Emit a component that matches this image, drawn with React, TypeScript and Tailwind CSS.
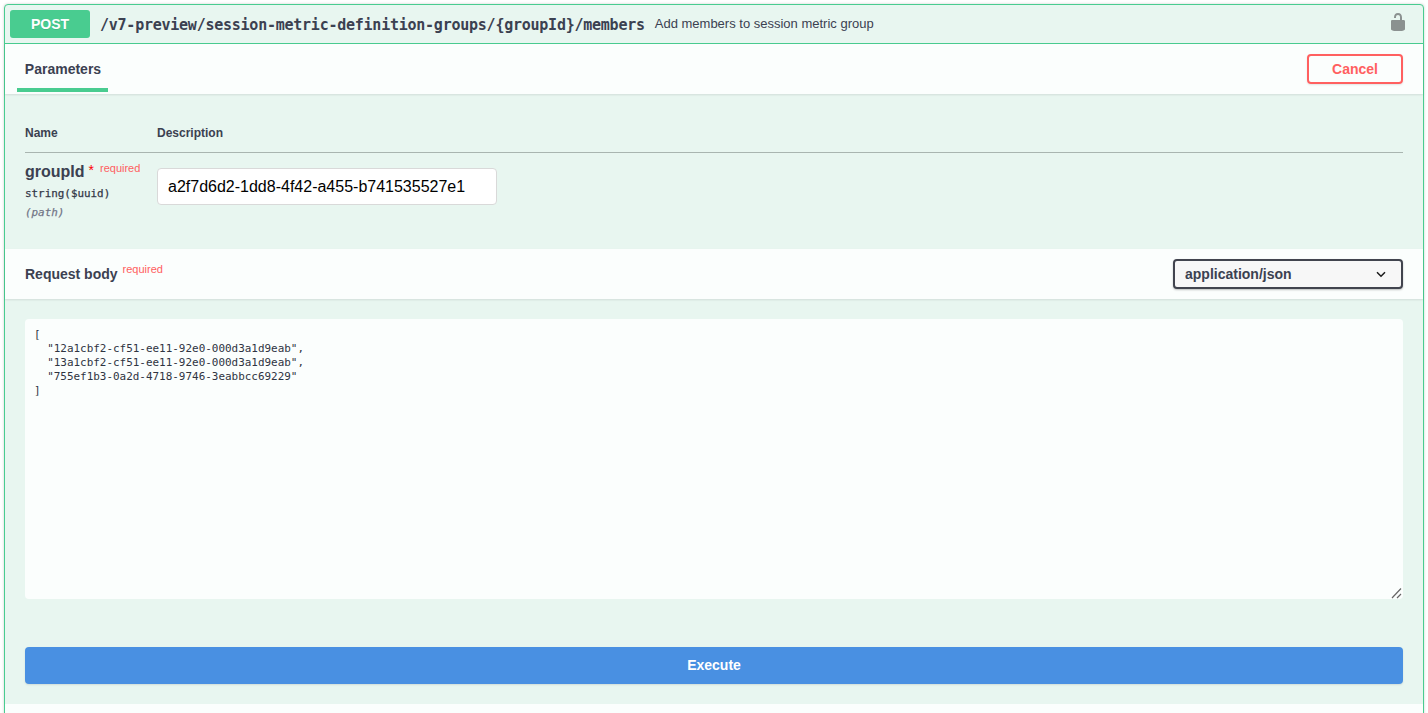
const sans = "font-['Liberation_Sans',Arial,sans-serif]";

const body = `[
  "12a1cbf2-cf51-ee11-92e0-000d3a1d9eab",
  "13a1cbf2-cf51-ee11-92e0-000d3a1d9eab",
  "755ef1b3-0a2d-4718-9746-3eabbcc69229"
]`;

export default function App() {
  return (
    <div className={`h-[713px] overflow-hidden bg-white px-1 pt-1 text-[#3b4151] ${sans}`}>
      <div className="h-[800px] rounded-[4px] border border-[#49cc90] bg-[#e8f6f0] shadow-[0_0_3px_rgba(0,0,0,0.19)]">
        {/* Summary */}
        <div className="flex h-[39px] items-center border-b border-[#49cc90] pl-[5px] pr-[15px]">
          <span className="flex h-[28px] w-[80px] shrink-0 items-center justify-center rounded-[3px] bg-[#49cc90] text-[14px] font-bold text-white [text-shadow:0_1px_0_rgba(0,0,0,0.1)]">
            POST
          </span>
          <span className="ml-[10px] pt-[2px] font-['DejaVu_Sans_Mono',monospace] text-[15px] font-bold tracking-[-0.245px] whitespace-nowrap">
            /v7-preview/session-metric-definition-groups/{"{groupId}"}/members
          </span>
          <span className="ml-[10px] text-[13px] whitespace-nowrap">Add members to session metric group</span>
          <svg className="mb-[4px] ml-auto" width="20" height="20" viewBox="0 0 20 20" fill="#8b9190">
            <path d="M15.8 8H14V5.6C14 2.703 12.665 1 10 1 7.334 1 6 2.703 6 5.6V6h2v-.801C8 3.754 8.797 3 10 3c1.203 0 2 .754 2 2.199V8H4c-.553 0-1 .646-1 1.199V17c0 .549.428 1.139.951 1.307l1.197.387C5.672 18.861 6.55 19 7.1 19h5.8c.549 0 1.428-.139 1.951-.307l1.196-.387c.524-.167.953-.757.953-1.306V9.199C17 8.646 16.352 8 15.8 8z" />
          </svg>
        </div>

        {/* Parameters header */}
        <div className="flex h-[50px] items-start justify-between bg-[#fbfefd] pl-[12px] pr-[20px] shadow-[0_1px_2px_rgba(0,0,0,0.1)]">
          <div className="flex h-[48px] w-[91px] items-center justify-center border-b-4 border-[#49cc90] pt-[6px] pl-[1px] text-[14px] font-bold">
            Parameters
          </div>
          <button className="mt-[10px] h-[30px] w-[96px] rounded-[4px] border-2 border-[#ff6060] bg-transparent text-[14px] font-bold text-[#ff6060] shadow-[0_1px_2px_rgba(0,0,0,0.1)]">
            Cancel
          </button>
        </div>

        {/* Parameters table */}
        <div className="h-[155px] px-[20px] pt-[30px]">
          <div className="flex h-[29px] border-b border-[#a9b5b0] text-[12px] font-bold">
            <div className="w-[132px]">Name</div>
            <div>Description</div>
          </div>
          <div className="flex pt-[9px]">
            <div className="w-[132px]">
              <div className="flex h-[20px] items-start">
                <span className="text-[16px] leading-[20px] font-bold">groupId</span>
                <span className="ml-[4px] text-[14px] leading-[17px] text-[#ff0000]">*</span>
                <span className="ml-[6px] text-[11px] leading-[12px] text-[#ff6060]">required</span>
              </div>
              <div className="mt-[4px] font-['DejaVu_Sans_Mono',monospace] text-[10.9px] leading-[16px] text-[#2f3442] [-webkit-text-stroke:0.25px_#3b4151]">string($uuid)</div>
              <div className="mt-[3px] font-['DejaVu_Sans_Mono',monospace] text-[10.9px] leading-[16px] text-[#6b7080] italic [-webkit-text-stroke:0.25px_#7d8293]">(path)</div>
            </div>
            <input
              readOnly
              value="a2f7d6d2-1dd8-4f42-a455-b741535527e1"
              className="mt-[6px] h-[37px] w-[340px] rounded-[4px] border border-[#d9d9d9] bg-white px-[10px] text-[16px] text-black outline-none"
            />
          </div>
        </div>

        {/* Request body header */}
        <div className="flex h-[50px] items-center justify-between bg-[#fbfefd] px-[20px] shadow-[0_1px_2px_rgba(0,0,0,0.1)]">
          <div className="flex items-start">
            <span className="pt-[1px] text-[14px] font-bold">Request body</span>
            <span className="mt-[-2px] ml-[5px] text-[11px] text-[#ff6060]">required</span>
          </div>
          <div className="relative h-[30px] w-[230px]">
            <select className="h-full w-full appearance-none rounded-[4px] border-2 border-[#41444e] bg-[#f7f7f7] pl-[10px] text-[14px] font-bold text-[#3b4151] shadow-[0_1px_2px_rgba(0,0,0,0.25)] outline-none">
              <option>application/json</option>
            </select>
            <svg className="pointer-events-none absolute top-[12px] right-[17px]" width="10" height="7" viewBox="0 0 10 7" fill="none" stroke="#1a1a1a" strokeWidth="1.5">
              <path d="M1 1.2 5 5.2l4-4" />
            </svg>
          </div>
        </div>

        {/* Body editor */}
        <div className="px-[20px] pt-[20px]">
          <div className="relative">
            <textarea
              readOnly
              defaultValue={body}
              className="block h-[280px] w-full resize-none rounded-[4px] bg-[#fbfefd] px-[9px] pt-[9px] font-['DejaVu_Sans_Mono',monospace] text-[10.95px] leading-[14px] text-[#2f3442] outline-none"
            />
            <svg className="pointer-events-none absolute right-[1px] bottom-0" width="12" height="12" viewBox="0 0 12 12" fill="none" stroke="#666" strokeWidth="1.2">
              <path d="M2 11 11 1.5M7 11l4-4" />
            </svg>
          </div>
        </div>

        {/* Execute */}
        <div className="px-[20px] pt-[48px]">
          <button className="flex h-[37px] w-full items-center justify-center rounded-[4px] bg-[#4990e2] text-[14px] font-bold text-white shadow-[0_1px_2px_rgba(0,0,0,0.1)]">
            Execute
          </button>
        </div>

        <div className="mt-[20px] h-[60px] bg-[#fbfefd]" />
      </div>
    </div>
  );
}
